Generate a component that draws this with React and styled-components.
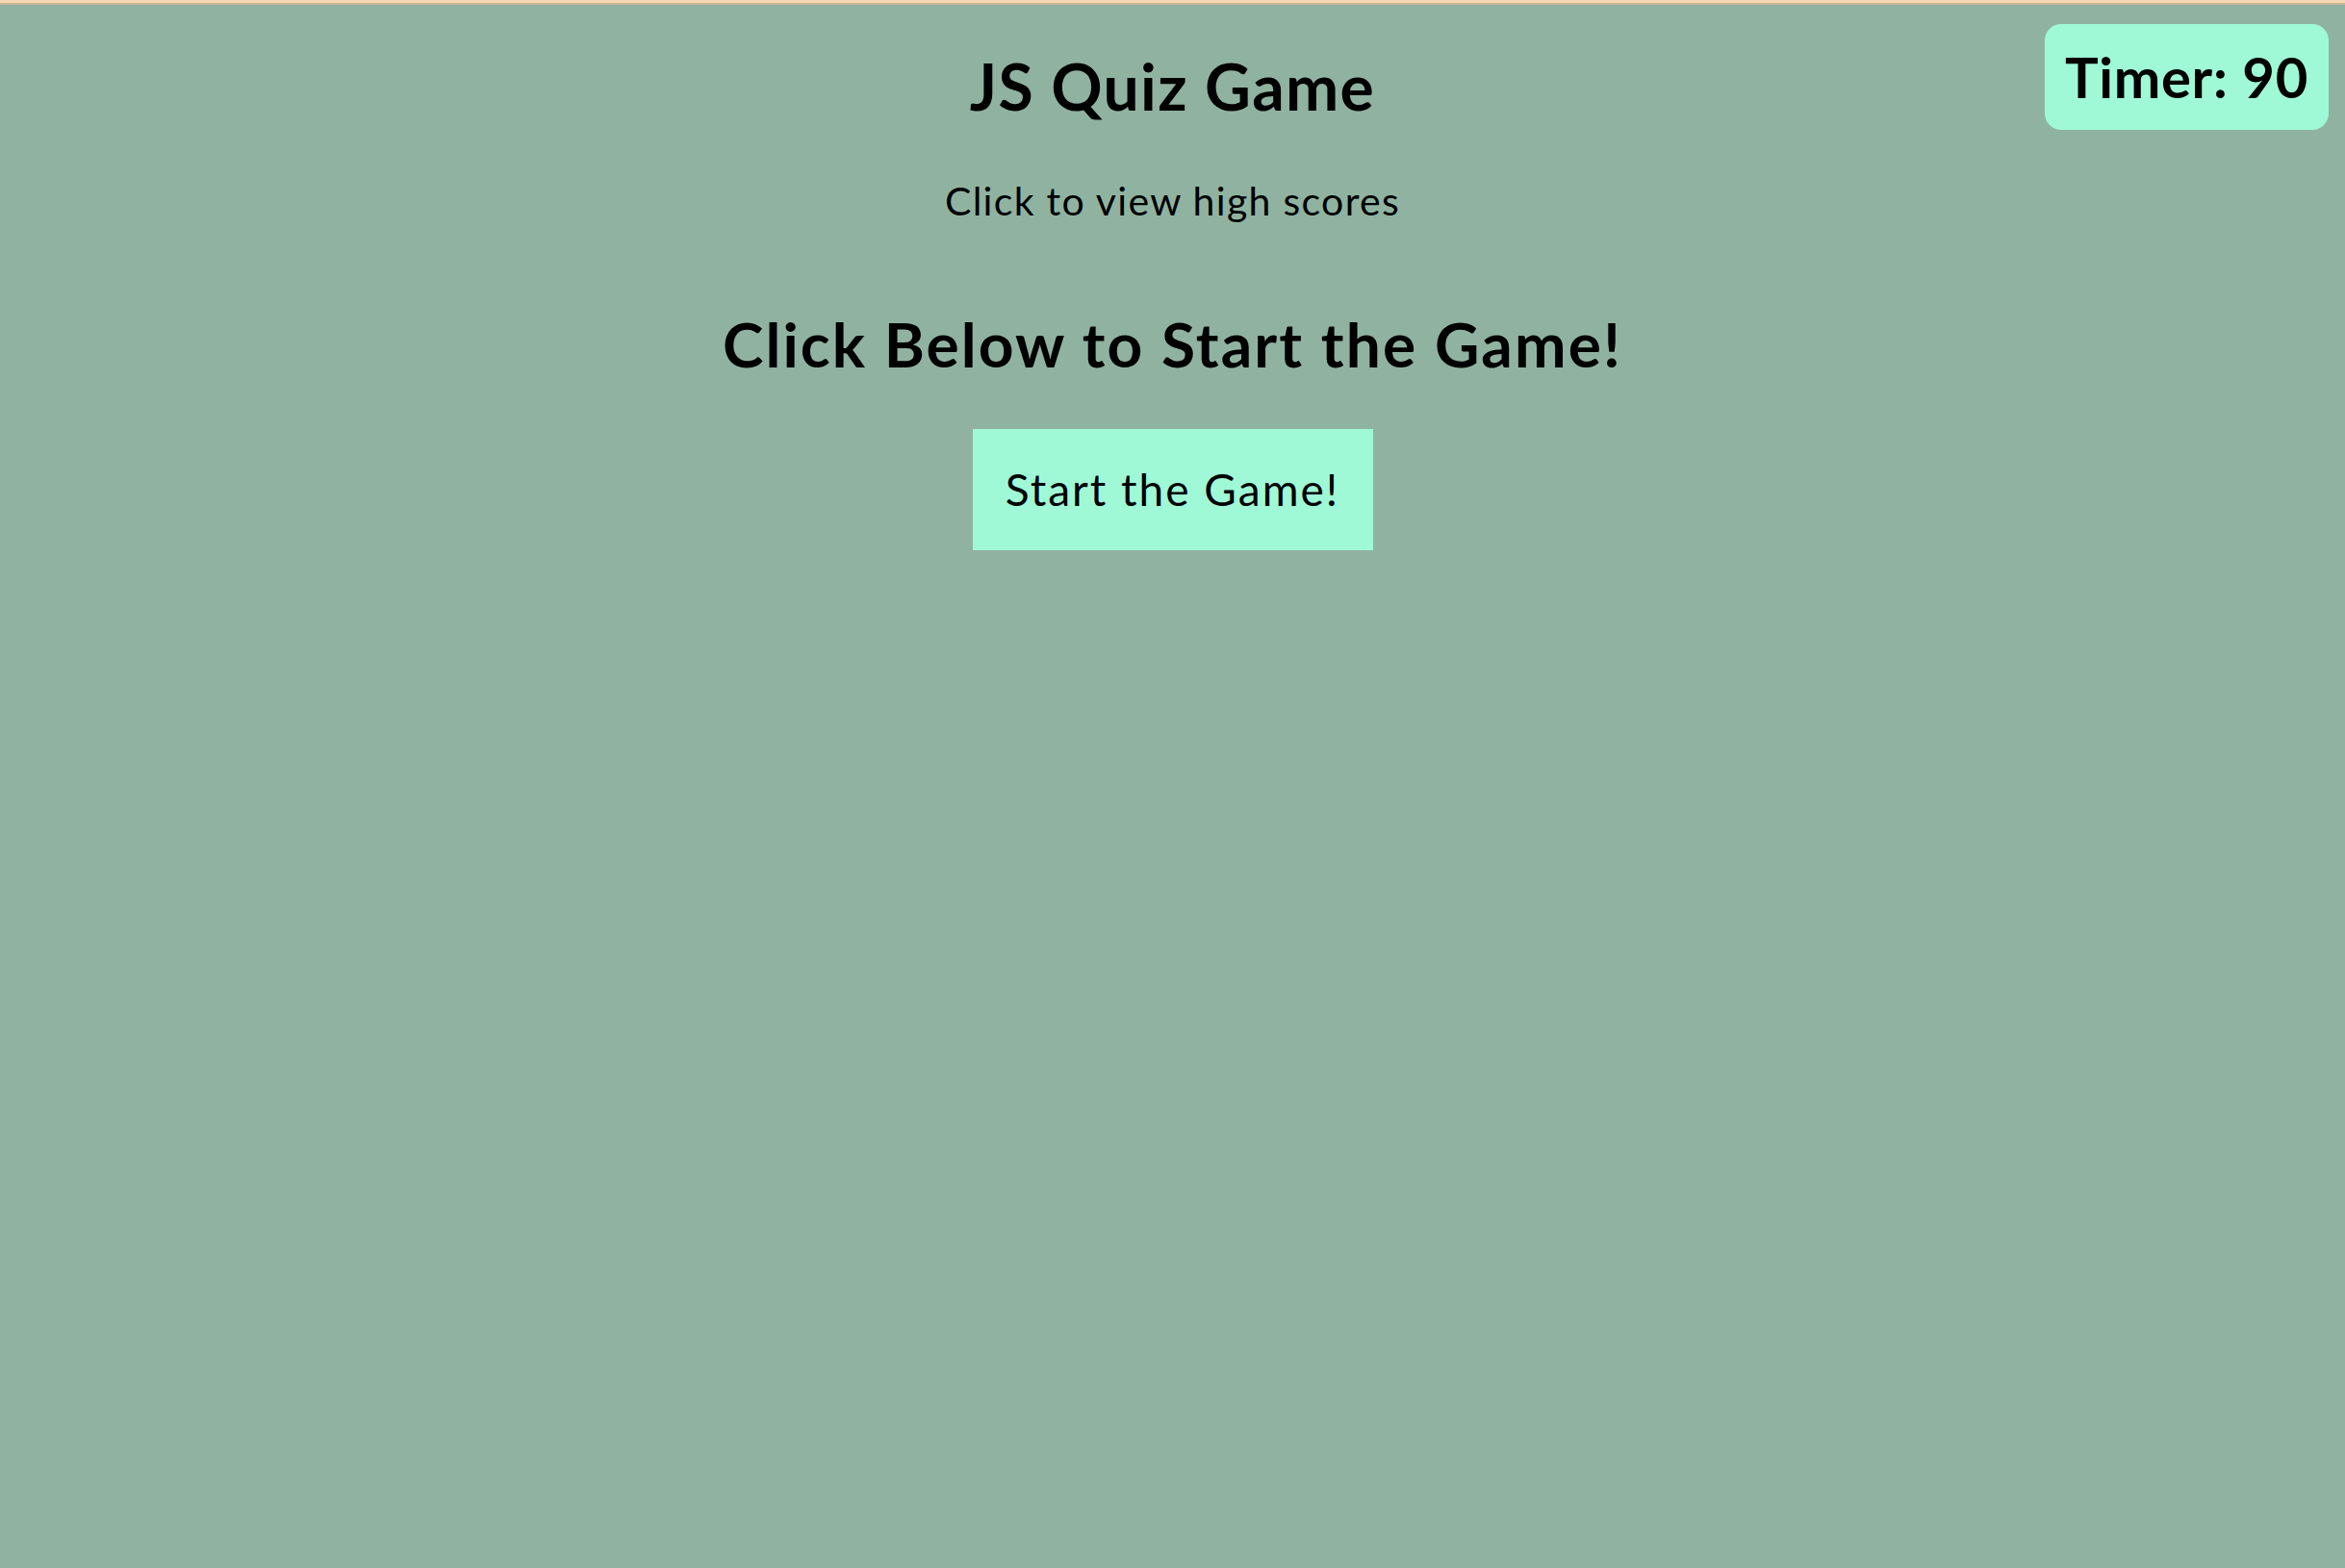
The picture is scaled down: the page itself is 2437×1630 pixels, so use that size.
import styled, { createGlobalStyle } from "styled-components";

const GlobalStyle = createGlobalStyle`
    html, body {
        margin: 0;
        padding: 0;
        background: #90b3a1;
    }
    body {
        font-family: Lato, "Open Sans", sans-serif;
        color: #000;
    }
`;

const Page = styled.div`
    min-height: 1630px;
    background: #90b3a1;
    position: relative;
`;

const TopBar = styled.div`
    height: 3px;
    background: #f8d8b4;
    border-bottom: 2px solid #c9b79c;
`;

const Main = styled.main`
    display: flex;
    flex-direction: column;
    align-items: center;
`;

const Title = styled.h1`
    margin: 52px 0 0;
    font-size: 66px;
    line-height: 1;
    font-weight: 700;
    letter-spacing: 1.3px;
`;

const ScoresLink = styled.a`
    margin-top: 65px;
    font-size: 41px;
    line-height: 1;
    font-weight: 400;
    color: #000;
    cursor: pointer;
    letter-spacing: 1.3px;
`;

const Prompt = styled.h2`
    margin: 97px 0 0;
    font-size: 64px;
    line-height: 1;
    font-weight: 700;
    letter-spacing: 2.1px;
`;

const StartButton = styled.button`
    margin-top: 56px;
    width: 416px;
    height: 126px;
    display: flex;
    align-items: center;
    justify-content: center;
    border: none;
    background: #9ff9d6;
    font-family: inherit;
    font-size: 46px;
    line-height: 1;
    letter-spacing: 2px;
    color: #000;
    cursor: pointer;
`;

const Timer = styled.div`
    position: absolute;
    top: 25px;
    right: 17px;
    width: 295px;
    height: 110px;
    display: flex;
    align-items: center;
    justify-content: center;
    background: #9ff9d6;
    border-radius: 17px;
    font-size: 58px;
    line-height: 1;
    font-weight: 700;
    letter-spacing: 0.7px;
`;

export default function App() {
    return (
        <Page>
            <GlobalStyle />
            <TopBar />
            <Main>
                <Title>JS Quiz Game</Title>
                <ScoresLink>Click to view high scores</ScoresLink>
                <Prompt>Click Below to Start the Game!</Prompt>
                <StartButton>Start the Game!</StartButton>
            </Main>
            <Timer>Timer: 90</Timer>
        </Page>
    );
}
